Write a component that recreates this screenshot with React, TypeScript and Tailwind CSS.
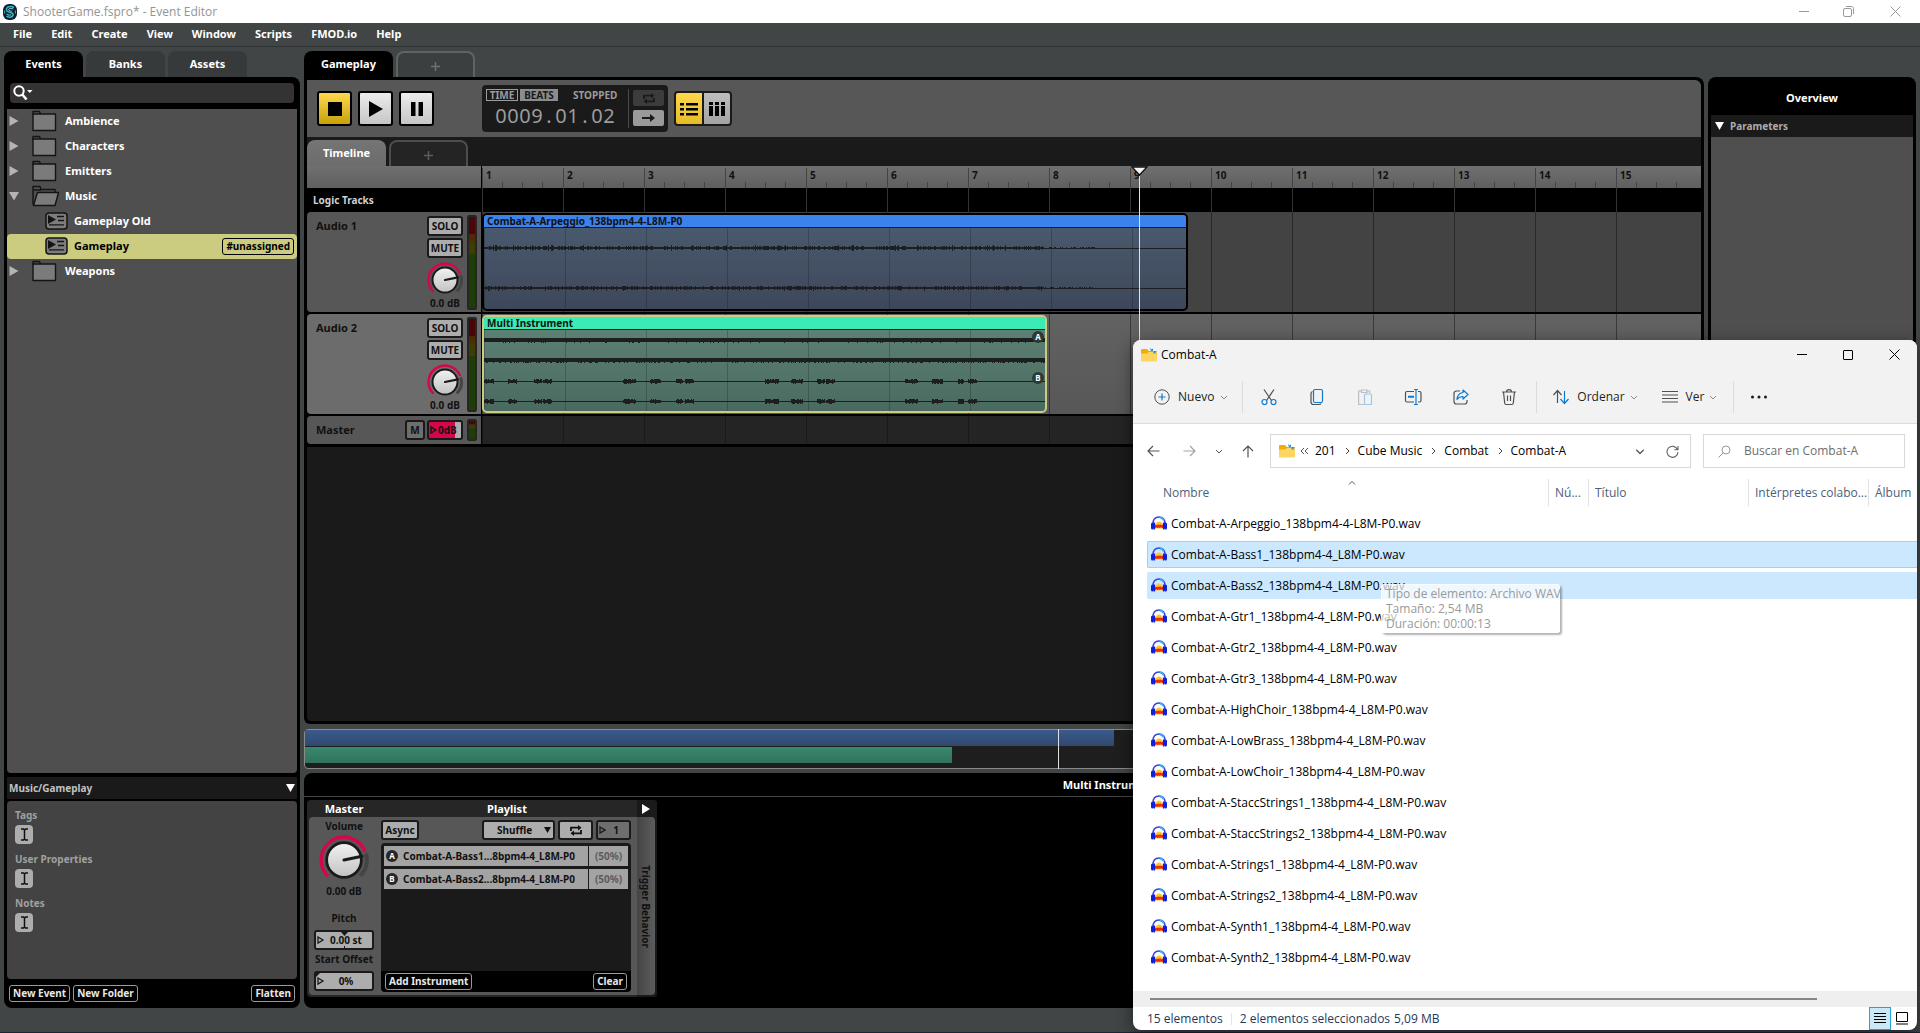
import React from "react";

const UI = "font-['Noto_Sans',sans-serif]";
const WIN = "font-['Open_Sans',sans-serif]";

/* ---------- small drawings ---------- */

function FmodLogo() {
  return (
    <svg width="14" height="16" viewBox="0 0 14 16" aria-hidden="true">
      <rect width="14" height="16" rx="6" fill="#111f2a" />
      <path d="M11 3.6C9 1.8 4.6 2 3.6 4.6 2.8 7 5 8 7 8.4c2.200.4 3.600 1.300 3 3-.8 2-4 2.400-6.600.8" fill="none" stroke="#35b6cf" strokeWidth="1.5" />
      <path d="M10.300 5.200C8.500 4 5.800 4.200 5.600 5.600c0 1.200 1.800 1.300 3.200 1.800M3.600 10.200c1.600 1.200 4.400 1.200 4.700.1" fill="none" stroke="#7fe3ee" strokeWidth="1" />
      <path d="M1.600 6.500v3M12.400 6.500v3" stroke="#35b6cf" strokeWidth="1" />
    </svg>
  );
}

function FolderIcon({ open = false }: { open?: boolean }) {
  return (
    <svg width="28" height="22" viewBox="0 0 28 22" aria-hidden="true">
      {open ? (
        <g stroke="#141414" strokeWidth="1.400" strokeLinejoin="round">
          <path d="M1 20V1.500h7l1 3h14V7" fill="#4f4f4f" />
          <path d="M1 5h8" fill="none" />
          <path d="M5.500 7.500h21L23 20.500H1.500z" fill="#7b7b7b" />
        </g>
      ) : (
        <g stroke="#141414" strokeWidth="1.400" strokeLinejoin="round">
          <path d="M1 5V1.500h6.500l1 2.500" fill="#4f4f4f" />
          <path d="M1 4h22.500v16.500H1z" fill="#7b7b7b" />
        </g>
      )}
    </svg>
  );
}

function EventIcon() {
  return (
    <svg width="23" height="18" viewBox="0 0 23 18" aria-hidden="true">
      <rect x="1" y="1" width="21" height="16" rx="3" fill="#7d7d7d" stroke="#141414" strokeWidth="1.500" />
      <path d="M3 3v9l8-4.500z" fill="#141414" />
      <path d="M12 4.500h7M13 8.500h6M4 12.800h15" stroke="#141414" strokeWidth="1.300" />
    </svg>
  );
}

function Arrow({ open = false }: { open?: boolean }) {
  return (
    <svg width="10" height="10" viewBox="0 0 10 10" aria-hidden="true">
      <path d={open ? "M0 1h10L5 9.500z" : "M0.500 0L9.500 5 0.500 10z"} fill="#b4b4b4" />
    </svg>
  );
}

function TriDown() {
  return (
    <svg width="9" height="8" viewBox="0 0 9 8" aria-hidden="true">
      <path d="M0 0h9L4.500 8z" fill="#fff" />
    </svg>
  );
}

function LoopIcon() {
  return (
    <svg width="12" height="11" viewBox="0 0 12 11" aria-hidden="true" fill="none" stroke="currentColor" strokeWidth="1.800">
      <path d="M1 6V2.700h8" />
      <path d="M11 5v3.300H3" />
      <path d="M8 0l3.500 2.700L8 5.400z" fill="currentColor" stroke="none" />
      <path d="M4 5.600L.5 8.300 4 11z" fill="currentColor" stroke="none" />
    </svg>
  );
}

function Knob({ label, large = false }: { label: string; large?: boolean }) {
  return (
    <div className={large ? "relative size-[50px]" : "relative size-9"}>
      <svg viewBox="0 0 36 36" className="size-full" aria-hidden="true">
        <defs>
          <linearGradient id="knobFace" x1="0" y1="0" x2="0" y2="1">
            <stop offset="0" stopColor="#f2f2f2" />
            <stop offset="1" stopColor="#c2c2c2" />
          </linearGradient>
        </defs>
        <path d="M33.800 13.400A16.400 16.400 0 0 1 29.800 29.400" fill="none" stroke="#454545" strokeWidth="3" />
        <path d="M6.400 29.600A16.400 16.400 0 1 1 33.300 12.200" fill="none" stroke="#d6064a" strokeWidth="2.400" />
        <circle cx="18" cy="18" r="12.500" fill="url(#knobFace)" stroke="#1a1a1a" strokeWidth="2" />
        <path d="M18 18L31 15.300" stroke="#1a1a1a" strokeWidth="2.200" strokeLinecap="round" />
      </svg>
      <input type="range" aria-label={label} defaultValue={75} className="absolute inset-0 size-full opacity-0" />
    </div>
  );
}

/* ---------- left browser ---------- */

const FOLDERS: { name: string; kind: "folder" | "open" | "event"; active?: boolean }[] = [
  { name: "Ambience", kind: "folder" },
  { name: "Characters", kind: "folder" },
  { name: "Emitters", kind: "folder" },
  { name: "Music", kind: "open" },
  { name: "Gameplay Old", kind: "event" },
  { name: "Gameplay", kind: "event", active: true },
  { name: "Weapons", kind: "folder" },
];

function Browser() {
  return (
    <aside className="flex w-[296px] shrink-0 flex-col">
      <div className="flex gap-[3px]">
        {["Events", "Banks", "Assets"].map((t, i) => (
          <button
            key={t}
            className={
              "h-[26px] w-[79px] rounded-t-lg text-[11px] font-bold text-white " + (i === 0 ? "bg-black" : "bg-[#363a3a]")
            }
          >
            {t}
          </button>
        ))}
      </div>
      <div className="flex flex-1 flex-col rounded-b-lg rounded-tr-lg bg-black px-[3px] pt-[6px]">
        <label className="mx-[3px] flex h-5 items-center rounded bg-[#333] pl-[3px]">
          <svg width="20" height="16" viewBox="0 0 20 16" aria-hidden="true">
            <circle cx="6" cy="6" r="4.700" fill="none" stroke="#fff" strokeWidth="2" />
            <path d="M9.300 9.500L13.500 14.500" stroke="#fff" strokeWidth="2.600" />
            <path d="M14 5h5.500l-2.700 3z" fill="#fff" />
          </svg>
          <input aria-label="Search events" className="min-w-0 flex-1 bg-transparent text-[12px] text-white outline-none" />
        </label>
        <ul className="mt-[6px] flex-1 rounded-b bg-[#4f4f4f]">
          {FOLDERS.map((f) => (
            <li key={f.name}>
              <button
                className={
                  "flex h-[25px] w-full items-center rounded-sm pb-px text-left text-[11px] font-bold " +
                  (f.active ? "bg-[#cccc80] text-black" : "text-white")
                }
              >
                {f.kind === "event" ? (
                  <>
                    <span className="ml-[38px] w-[29px]">
                      <EventIcon />
                    </span>
                    <span className="flex-1">{f.name}</span>
                    {f.active && (
                      <span className="mr-[3px] flex h-[17px] items-center rounded-[3px] border border-black px-[3px] text-[10px]">
                        #unassigned
                      </span>
                    )}
                  </>
                ) : (
                  <>
                    <span className="ml-[2px] w-[23px]">
                      <Arrow open={f.kind === "open"} />
                    </span>
                    <span className="w-[33px]">
                      <FolderIcon open={f.kind === "open"} />
                    </span>
                    {f.name}
                  </>
                )}
              </button>
            </li>
          ))}
        </ul>
        <div className="mt-1 flex h-[22px] items-center justify-between bg-[#1a1a1a] px-[2px] text-[10px] font-bold text-[#c2c2c2]">
          Music/Gameplay
          <TriDown />
        </div>
        <div className="mt-[2px] h-[178px] rounded bg-[#434343] px-2 pt-[5px]">
          {["Tags", "User Properties", "Notes"].map((t) => (
            <div key={t} className="h-11 text-[10px] leading-[18px] font-bold text-[#a0a0a0]">
              {t}
              <button aria-label={"Edit " + t} className="mt-px flex h-[19px] w-[18px] items-center justify-center rounded bg-[#adadad]">
                <svg width="9" height="13" viewBox="0 0 9 13" fill="none" stroke="#111" strokeWidth="1.500" aria-hidden="true">
                  <path d="M1 1h2.500l1 1 1-1H8M1 12h2.500l1-1 1 1H8M4.500 2v9" />
                </svg>
              </button>
            </div>
          ))}
        </div>
        <div className="flex h-[29px] items-center gap-[3px] px-[2px]">
          <DarkButton>New Event</DarkButton>
          <DarkButton>New Folder</DarkButton>
          <div className="flex-1" />
          <DarkButton>Flatten</DarkButton>
        </div>
      </div>
    </aside>
  );
}

function DarkButton({ children }: { children: React.ReactNode }) {
  return (
    <button className="h-[17px] rounded-[3px] border border-[#9a9a9a] bg-black px-[3px] text-[10px] leading-[15px] font-bold whitespace-nowrap text-[#e8e8e8]">
      {children}
    </button>
  );
}

/* ---------- editor ---------- */

function AddTab({ dark = false }: { dark?: boolean }) {
  return (
    <button
      aria-label="Add tab"
      className={
        "flex h-[26px] w-[79px] items-center justify-center rounded-t-lg border-2 border-b-0 pt-[2px] " +
        (dark ? "border-[#4d4d4d] bg-[#242424] text-[#5c5c5c]" : "border-[#606363] bg-[#3b3f3f] text-[#6e7272]")
      }
    >
      <svg width="9" height="9" viewBox="0 0 9 9" stroke="currentColor" strokeWidth="1.500" aria-hidden="true">
        <path d="M4.500 0v9M0 4.500h9" />
      </svg>
    </button>
  );
}

function Transport() {
  const big = "flex h-[35px] w-[35px] items-center justify-center rounded-[3px] border-2 border-black ";
  return (
    <div className="flex h-[57px] items-center rounded-tr-md bg-[#575757] pl-[10px]">
      <div className="flex gap-[6px]">
        <button aria-label="Stop" className={big + "bg-linear-to-b from-[#ffd84a] to-[#c7a100]"}>
          <span className="size-[14px] bg-black" />
        </button>
        <button aria-label="Play" className={big + "bg-linear-to-b from-[#ececec] to-[#c6c6c6]"}>
          <svg width="14" height="16" viewBox="0 0 14 16" aria-hidden="true">
            <path d="M0 0l14 8-14 8z" />
          </svg>
        </button>
        <button aria-label="Pause" className={big + "bg-linear-to-b from-[#ececec] to-[#c6c6c6]"}>
          <svg width="12" height="14" viewBox="0 0 12 14" aria-hidden="true">
            <path d="M0 0h4.500v14H0zM7.500 0H12v14H7.500z" />
          </svg>
        </button>
      </div>
      <div className="ml-[48px] flex h-[47px] w-[186px] rounded bg-[#1a1a1a] py-1 pl-1 text-[#9c9c9c]">
        <div className="w-[143px] border-r border-[#4a4a4a]">
          <div className="flex h-3 items-center text-[10px] leading-3 font-bold">
            <button className="h-3 w-8 border border-[#9c9c9c] leading-[10px]">TIME</button>
            <button className="ml-[2px] h-3 w-[38px] bg-[#8c8c8c] leading-3 text-[#1a1a1a]">BEATS</button>
            <span className="ml-[15px]">STOPPED</span>
          </div>
          <div className="mt-[3px] flex justify-center pr-1 text-[20px] leading-[24px]">
            {"0009.01.02".split("").map((c, i) => (
              <span key={i} className="w-3 text-center">
                {c}
              </span>
            ))}
          </div>
        </div>
        <div className="ml-1 flex flex-col gap-1 pt-px">
          <button aria-label="Loop" className="flex h-4 w-[31px] items-center justify-center rounded-[2px] bg-[#3c3c3c] text-[#1a1a1a]">
            <LoopIcon />
          </button>
          <button aria-label="Follow playhead" className="flex h-4 w-[31px] items-center justify-center rounded-[2px] bg-[#9a9a9a]">
            <svg width="13" height="8" viewBox="0 0 13 8" aria-hidden="true">
              <path d="M0 3h8V0l5 4-5 4V5H0z" fill="#1a1a1a" />
            </svg>
          </button>
        </div>
      </div>
      <div className="ml-[6px] flex h-[35px] w-[58px] rounded border-2 border-[#1a1a1a] bg-[#1a1a1a]">
        <button aria-label="Track view" className="flex w-[26px] items-center justify-center rounded-l-[2px] bg-linear-to-b from-[#ffd84a] to-[#e6bc25]">
          <svg width="18" height="14" viewBox="0 0 18 14" aria-hidden="true">
            <path d="M0 1h4v2.500H0zM6 1h12v2.500H6zM0 6h4v2.500H0zM6 6h12v2.500H6zM0 11h4v2.500H0zM6 11h12v2.500H6z" />
          </svg>
        </button>
        <button aria-label="Mixer view" className="ml-[2px] flex flex-1 items-center justify-center rounded-r-[2px] bg-linear-to-b from-[#bdbdbd] to-[#a3a3a3]">
          <svg width="16" height="14" viewBox="0 0 16 14" aria-hidden="true">
            <path d="M0 0h4v3H0zM6 0h4v3H6zM12 0h4v3h-4zM0 4h4v10H0zM6 4h4v10H6zM12 4h4v10h-4z" />
          </svg>
        </button>
      </div>
    </div>
  );
}

const BARS = Array.from({ length: 15 }, (_, i) => i + 1);

function GridLines({ tone }: { tone: string }) {
  return (
    <div className="pointer-events-none absolute inset-0 flex overflow-hidden" aria-hidden="true">
      {BARS.map((b) => (
        <div key={b} className={"w-[81px] shrink-0 border-l " + tone} />
      ))}
    </div>
  );
}

function Ruler() {
  return (
    <div className="flex h-[22px] flex-1 overflow-hidden bg-linear-to-b from-[#707070] to-[#5f5f5f]">
      {BARS.map((b) => (
        <div key={b} className="relative mt-[2px] w-[81px] shrink-0 border-l border-[#444] pl-[3px] text-[10px] leading-[15px] font-bold text-[#111]">
          {b}
          <div className="absolute bottom-0 left-0 flex h-[6px]">
            <i className="w-5 border-r border-[#444]" />
            <i className="w-5 border-r border-[#444]" />
            <i className="w-5 border-r border-[#444]" />
          </div>
        </div>
      ))}
    </div>
  );
}

function seeded(seed: number) {
  let s = seed;
  return () => {
    s = (s * 16807) % 2147483647;
    return s / 2147483647;
  };
}

/* One column per pixel; sizes are [quiet, medium, peak] and odds the thresholds for the last two. */
function noisePath(y: number, width: number, end: number, sizes: number[], odds: number[], seed: number) {
  const rnd = seeded(seed);
  let d = "";
  for (let x = 0; x < width; x += 1) {
    let h = 1;
    if (x < end) {
      const r = rnd();
      h = r > odds[1] ? sizes[2] : r > odds[0] ? sizes[1] : sizes[0];
    } else if (x < end + 52) {
      h = rnd() > 0.6 ? 2 : 1;
    }
    d += `M${x} ${y - Math.floor(h / 2)}h1v${h}h-1z`;
  }
  return d;
}

const BURSTS = [
  [0, 10], [24, 33], [50, 58], [59, 68], [139, 152], [166, 177], [192, 199], [201, 210],
  [281, 295], [307, 319], [333, 341], [342, 351], [421, 434], [448, 459], [474, 480], [484, 493],
];

function burstPath(y: number, width: number, seed: number) {
  const rnd = seeded(seed);
  let d = `M0 ${y}h${width}v1H0z`;
  BURSTS.forEach(([a, b]) => {
    for (let x = a; x < b; x += 1) {
      const h = 3 + Math.floor(rnd() * 3);
      d += `M${x} ${y - Math.floor(h / 2)}h1v${h}h-1z`;
    }
  });
  return d;
}

const WAVE_A = noisePath(20, 702, 560, [2, 4, 6], [0.6, 0.96], 77) + noisePath(60, 702, 560, [2, 4, 5], [0.65, 0.96], 991);
const WAVE_B =
  noisePath(10, 561, 700, [4, 4, 5], [0.7, 0.9], 313) +
  noisePath(30, 561, 700, [4, 5, 5], [0.7, 0.9], 815) +
  burstPath(51, 561, 5) +
  burstPath(71, 561, 19);

function Clip({ kind }: { kind: "audio" | "multi" }) {
  const a = kind === "audio";
  return (
    <div
      className={
        "absolute top-px left-0 h-[98px] overflow-hidden rounded-[5px] border-2 " +
        (a ? "w-[706px] border-black bg-linear-to-b from-[#4b5c70] to-[#3e475a]" : "w-[565px] border-[#cccc80] bg-linear-to-b from-[#5f8477] to-[#4b6a5f]")
      }
    >
      <GridLines tone="border-black/20" />
      <div
        className={
          "relative h-[13px] border-b border-[#1a1a1a] pl-[3px] text-[10px] leading-3 font-bold whitespace-nowrap text-[#111] " +
          (a ? "bg-[#3a82ec]" : "bg-[#3aebb5]")
        }
      >
        {a ? "Combat-A-Arpeggio_138bpm4-4-L8M-P0" : "Multi Instrument"}
      </div>
      <svg width={a ? 702 : 561} height="81" className="relative block" shapeRendering="crispEdges" aria-hidden="true">
        <path d={a ? WAVE_A : WAVE_B} fill="#1c1f20" />
      </svg>
      {!a && (
        <div className="absolute top-[14px] right-[1px] flex flex-col gap-[29px]">
          {["A", "B"].map((l) => (
            <span key={l} className="flex size-3 items-center justify-center rounded-full bg-[#2c3a36] text-[8px] leading-3 font-bold text-white">
              {l}
            </span>
          ))}
        </div>
      )}
    </div>
  );
}

function Meter() {
  return (
    <div className="flex w-[10px] flex-col overflow-hidden rounded-[2px] border-2 border-[#262626]">
      <span className="h-[19%] bg-[#4a0508]" />
      <span className="h-[7%] bg-[#4c2b06]" />
      <span className="h-[15%] bg-[#3f3d06]" />
      <span className="flex-1 bg-[#1e3d07]" />
    </div>
  );
}

function Track({ name, active = false, children }: { name: string; active?: boolean; children: React.ReactNode }) {
  const btn = "h-5 w-9 rounded-[3px] border-2 border-[#1a1a1a] bg-[#adadad] text-[10px] leading-4 font-bold text-[#111]";
  return (
    <div className="mb-[2px] flex h-[100px] gap-px">
      <div className={"flex w-[174px] shrink-0 rounded-l pr-1 " + (active ? "bg-[#6c6c6c]" : "bg-[#575757]")}>
        <div className="flex-1 pt-[5px] pl-[9px] text-[11px] leading-[18px] font-bold text-[#111]">{name}</div>
        <div className="mr-1 flex flex-col items-center pt-1">
          <button className={btn}>SOLO</button>
          <button className={btn + " mt-[2px]"}>MUTE</button>
          <div className="mt-1 h-[33px]">
            <Knob label={name + " volume"} />
          </div>
          <span className="text-[10px] leading-4 font-bold whitespace-nowrap text-[#111]">0.0 dB</span>
        </div>
        <div className="flex py-[2px] pt-[3px]">
          <Meter />
        </div>
      </div>
      <div className={"relative flex-1 overflow-hidden " + (active ? "bg-linear-to-b from-[#626262] to-[#575757]" : "bg-[#434343]")}>
        <GridLines tone="border-black/40" />
        {children}
      </div>
    </div>
  );
}

function Editor() {
  return (
    <section className="flex min-w-0 flex-1 flex-col">
      <div className="flex gap-[3px]">
        <button className="h-[26px] w-[89px] rounded-t-lg bg-black text-[11px] font-bold text-white">Gameplay</button>
        <AddTab />
      </div>
      <div className="flex flex-1 flex-col rounded-b-md rounded-tr-lg bg-black p-[3px]">
        <Transport />
        <div className="flex h-[29px] items-end gap-[3px] bg-[#1a1a1a]">
          <button className="h-[26px] w-[79px] rounded-t-lg bg-linear-to-b from-[#757575] to-[#6c6c6c] text-[11px] font-bold text-white">Timeline</button>
          <AddTab dark />
        </div>
        <div className="relative">
          <div className="flex gap-px">
            <div className="w-[174px] bg-linear-to-b from-[#707070] to-[#5f5f5f]" />
            <Ruler />
          </div>
          <div className="flex h-6 gap-px">
            <div className="w-[174px] pl-[6px] text-[10px] leading-6 font-bold text-[#d0d0d0]">Logic Tracks</div>
            <div className="relative flex-1">
              <GridLines tone="border-[#333]" />
            </div>
          </div>
          <Track name="Audio 1">
            <Clip kind="audio" />
          </Track>
          <Track name="Audio 2" active>
            <Clip kind="multi" />
          </Track>
          <div className="flex h-7 gap-px">
            <div className="flex w-[174px] items-center rounded-l bg-[#575757] pr-1">
              <span className="flex-1 pl-[9px] text-[11px] font-bold text-[#111]">Master</span>
              <button className="mr-[2px] h-5 w-5 rounded-[3px] border-2 border-[#1a1a1a] bg-[#6e6e6e] text-[10px] leading-4 font-bold text-[#111]">M</button>
              <label className="mr-1 flex h-5 w-9 items-center rounded-[3px] border-2 border-[#1a1a1a] bg-linear-to-r from-[#d6064a] from-80% to-[#adadad] to-80%">
                <svg width="7" height="8" viewBox="0 0 7 8" className="ml-px shrink-0" aria-hidden="true">
                  <path d="M1 1l5 3-5 3z" fill="none" stroke="#1a1a1a" strokeWidth="1.500" />
                </svg>
                <input aria-label="Master volume" defaultValue="0dB" className="w-6 bg-transparent pl-px text-[10px] font-bold text-[#111] outline-none" />
              </label>
              <div className="flex h-[22px]">
                <Meter />
              </div>
            </div>
            <div className="relative flex-1 bg-[#242424]">
              <GridLines tone="border-black/30" />
            </div>
          </div>
          <div className="absolute top-0 left-[823px] flex h-[280px] w-[19px] flex-col items-center">
            <svg width="19" height="10" viewBox="0 0 19 10" className="shrink-0" aria-hidden="true">
              <path d="M2 1h15L9.500 9z" fill="#f4f4f4" stroke="#111" strokeWidth="1.300" />
            </svg>
            <div className="w-px flex-1 bg-[#e0e0e0]" />
          </div>
        </div>
        <div className="mt-[3px] flex-1 rounded-b bg-[#1a1a1a]" />
      </div>
      <div className="relative mt-[5px] h-10 rounded-sm border border-[#8a8a8a] bg-[#1e1e1e]">
        <div className="h-4 w-[809px] bg-linear-to-b from-[#3a5b8c] to-[#30486f]" />
        <div className="mt-px h-4 w-[647px] bg-linear-to-b from-[#378a6d] to-[#31725d]" />
        <div className="absolute -top-px left-[753px] h-10 w-px bg-[#e0e0e0]" />
      </div>
    </section>
  );
}

/* ---------- deck ---------- */

function ValueBox({ label, value, mark = false }: { label: string; value: string; mark?: boolean }) {
  return (
    <label className="flex flex-col items-center text-[10px] leading-[18px] font-bold text-[#111]">
      <span className="whitespace-nowrap">{label}</span>
      <span className="relative mt-[3px] block h-5 w-[60px] rounded-[3px] border-2 border-[#1a1a1a] bg-[#adadad]">
        <svg width="56" height="16" viewBox="0 0 56 16" className="absolute top-0 left-0" aria-hidden="true">
          <path d="M2 5l5 3-5 3z" fill="none" stroke="#1a1a1a" strokeWidth="1.300" />
          {mark ? <path d="M25 0h7l-3.500 4zM28 14h1v2h-1z" fill="#1a1a1a" /> : <path d="M0 0h4L0 4z" fill="#1a1a1a" />}
        </svg>
        <input defaultValue={value} className="relative block h-4 w-full bg-transparent pl-1 text-center text-[10px] outline-none" />
      </span>
    </label>
  );
}

function Deck() {
  const btn = "h-5 rounded-[3px] border-2 border-[#1a1a1a] bg-[#adadad] text-[10px] leading-4 font-bold text-[#111]";
  return (
    <section className="mt-1 h-[235px] rounded-lg bg-black">
      <h2 className="h-6 border-b border-[#444] text-center text-[11px] leading-6 font-bold text-white">Multi Instrument</h2>
      <div className="mt-[3px] ml-[3px] flex h-[197px] w-[350px] overflow-hidden rounded bg-[#262626]">
        <div className="flex w-[330px] flex-col pb-[2px] pl-[2px]">
          <div className="flex h-[17px] text-[11px] leading-[17px] font-bold text-white">
            <span className="w-[70px] text-center">Master</span>
            <span className="flex-1 pr-[2px] text-center">Playlist</span>
          </div>
          <div className="flex flex-1 rounded-l bg-[#575757]">
            <div className="flex w-[72px] flex-col items-center pr-[2px] text-[10px] leading-[18px] font-bold text-[#111]">
              Volume
              <div className="h-[47px]">
                <Knob label="Instrument volume" large />
              </div>
              <span>0.00 dB</span>
              <div className="mt-[9px]">
                <ValueBox label="Pitch" value="0.00 st" mark />
              </div>
              <ValueBox label="Start Offset" value="0%" />
            </div>
            <div className="flex w-[250px] flex-col pt-[3px] pb-[3px]">
              <div className="flex h-5">
                <button className={btn + " w-[38px]"}>Async</button>
                <div className="relative ml-[63px] h-5">
                  <select aria-label="Playlist mode" className={btn + " block w-[73px] appearance-none py-0 pl-[13px] outline-none"}>
                    <option>Shuffle</option>
                  </select>
                  <svg width="7" height="6" viewBox="0 0 7 6" className="pointer-events-none absolute top-[7px] right-1" aria-hidden="true">
                    <path d="M0 0h7L3.500 6z" fill="#111" />
                  </svg>
                </div>
                <button aria-label="Loop playlist" className={btn + " ml-[3px] flex w-[35px] items-center justify-center"}>
                  <LoopIcon />
                </button>
                <label className="ml-[3px] flex h-5 w-[35px] items-center rounded-[3px] border-2 border-[#1a1a1a] bg-[#6e6e6e]">
                  <svg width="8" height="10" viewBox="0 0 8 10" className="shrink-0" aria-hidden="true">
                    <path d="M2 2l5 3-5 3z" fill="none" stroke="#1a1a1a" strokeWidth="1.300" />
                  </svg>
                  <input aria-label="Play count" defaultValue="1" className="w-5 bg-transparent text-center text-[10px] font-bold text-[#111] outline-none" />
                </label>
              </div>
              <div className="mt-[3px] flex flex-1 flex-col gap-[3px] rounded-t bg-[#1a1a1a] p-[3px]">
                {[
                  ["A", "Combat-A-Bass1...8bpm4-4_L8M-P0"],
                  ["B", "Combat-A-Bass2...8bpm4-4_L8M-P0"],
                ].map(([l, n]) => (
                  <div key={l} className="flex h-5 gap-px text-[10px] font-bold">
                    <span className="flex flex-1 items-center bg-[#a3a3a3] pl-[2px] whitespace-nowrap text-[#111]">
                      <span className="mr-[5px] flex size-3 items-center justify-center rounded-full bg-[#262626] text-[8px] text-white">{l}</span>
                      {n}
                    </span>
                    <span className="flex w-[39px] items-center justify-center bg-[#a3a3a3] text-[#5c5c5c]">(50%)</span>
                  </div>
                ))}
              </div>
              <div className="flex h-[21px] items-center justify-between rounded-b bg-black px-1">
                <DarkButton>Add Instrument</DarkButton>
                <DarkButton>Clear</DarkButton>
              </div>
            </div>
          </div>
        </div>
        <div className="flex w-5 flex-col bg-[#1a1a1a] pr-[2px] pb-[2px]">
          <button aria-label="Expand" className="flex h-[17px] items-center justify-center">
            <svg width="8" height="10" viewBox="0 0 8 10" aria-hidden="true">
              <path d="M0 0l8 5-8 5z" fill="#fff" />
            </svg>
          </button>
          <button className="flex flex-1 items-center justify-center rounded-r bg-linear-to-r from-[#454545] to-[#5c5c5c] text-[10px] leading-[18px] font-bold text-[#111] [writing-mode:vertical-rl]">
            Trigger Behavior
          </button>
        </div>
      </div>
    </section>
  );
}

/* ---------- file explorer window ---------- */

const FILES = [
  "Combat-A-Arpeggio_138bpm4-4-L8M-P0.wav",
  "Combat-A-Bass1_138bpm4-4_L8M-P0.wav",
  "Combat-A-Bass2_138bpm4-4_L8M-P0.wav",
  "Combat-A-Gtr1_138bpm4-4_L8M-P0.wav",
  "Combat-A-Gtr2_138bpm4-4_L8M-P0.wav",
  "Combat-A-Gtr3_138bpm4-4_L8M-P0.wav",
  "Combat-A-HighChoir_138bpm4-4_L8M-P0.wav",
  "Combat-A-LowBrass_138bpm4-4_L8M-P0.wav",
  "Combat-A-LowChoir_138bpm4-4_L8M-P0.wav",
  "Combat-A-StaccStrings1_138bpm4-4_L8M-P0.wav",
  "Combat-A-StaccStrings2_138bpm4-4_L8M-P0.wav",
  "Combat-A-Strings1_138bpm4-4_L8M-P0.wav",
  "Combat-A-Strings2_138bpm4-4_L8M-P0.wav",
  "Combat-A-Synth1_138bpm4-4_L8M-P0.wav",
  "Combat-A-Synth2_138bpm4-4_L8M-P0.wav",
];

function AudacityIcon() {
  return (
    <svg width="16" height="15" viewBox="0 0 16 15" className="shrink-0" aria-hidden="true">
      <path d="M3.500 12.500V9.500C4.500 7.500 6 5.500 8 5.500s3.500 2 4.500 4v3z" fill="#ffc629" />
      <path d="M3.500 9.500l1.300-.7 1.200.5 1-1 1 .8 1.200-.9 1 1 1.200-.5 1.100.8v2.200l-1.500.3-1-.7-1.200.8-1-.7-1.300.7-1-.6-1.500.6-.5-.6z" fill="#f02810" />
      <path d="M2 8C2 3 4.500 1 8 1s6 2 6 7" fill="none" stroke="#3a44e0" strokeWidth="1.500" />
      <path d="M9 1.500c2 .3 3 1.300 3.500 2.700" stroke="#39b3ee" strokeWidth="1.800" fill="none" />
      <rect x="0" y="6.500" width="3" height="7" rx="1.500" fill="#1020d8" />
      <rect x="13" y="6.500" width="3" height="7" rx="1.500" fill="#1020d8" />
      <path d="M3.500 6.500v7M12.500 6.500v7" stroke="#1020d8" strokeWidth="1.200" />
    </svg>
  );
}

function YellowFolder() {
  return (
    <svg width="16" height="14" viewBox="0 0 16 14" className="shrink-0" aria-hidden="true">
      <path d="M0 2C0 1.300.5 1 1 1h5l2 2h8v10H0z" fill="#f2ab0c" />
      <path d="M0 5.500h6l2-1.500h8v8.500c0 .6-.4 1-1 1H1c-.6 0-1-.4-1-1z" fill="#ffd562" />
      <path d="M9 .6l2 1.600M11.500.8v1.900H9.700M15 5.600l-1.700-1.700M13 5.600V3.700h1.800" stroke="#1c84d4" strokeWidth="1" fill="none" />
    </svg>
  );
}

function Chevron({ dir = "down", size = 8, stroke = "#8a8a8a" }: { dir?: "down" | "up" | "right"; size?: number; stroke?: string }) {
  const d = dir === "down" ? "M1 3l3 3 3-3" : dir === "up" ? "M1 5.500L4 2.500l3 3" : "M3 1l3 3-3 3";
  return (
    <svg width={size} height={size} viewBox="0 0 8 8" fill="none" stroke={stroke} className="shrink-0" aria-hidden="true">
      <path d={d} />
    </svg>
  );
}

const ic = { width: 18, height: 18, viewBox: "0 0 18 18", fill: "none", strokeWidth: 1.2, "aria-hidden": true } as const;
const G = "#505050";
const B = "#0c7ad2";

function ExplorerTools() {
  const tool = "flex size-12 items-center justify-center";
  return (
    <div className="flex h-[54px] items-center pt-[2px] text-[12px] text-[#1f1f1f]">
      <button className="ml-[21px] flex items-center">
        <svg width="16" height="16" viewBox="0 0 16 16" fill="none" aria-hidden="true">
          <circle cx="8" cy="8" r="7.200" stroke={G} />
          <path d="M8 4.500v7M4.500 8h7" stroke={B} strokeWidth="1.200" />
        </svg>
        <span className="mr-[6px] ml-2">Nuevo</span>
        <Chevron />
      </button>
      <div className="ml-[14px] h-8 w-px bg-[#dcdcdc]" />
      <div className="ml-[2px] flex">
        <button aria-label="Cortar" className={tool}>
          <svg {...ic}>
            <path d="M4 1.500l7.500 11M14 1.500l-7.500 11" stroke={G} />
            <circle cx="4.500" cy="14" r="2.500" stroke={B} />
            <circle cx="13.500" cy="14" r="2.500" stroke={B} />
          </svg>
        </button>
        <button aria-label="Copiar" className={tool}>
          <svg {...ic}>
            <path d="M4.500 3.500C3.500 3.800 3 4.500 3 5.500V14c0 1.600 1 2.500 2.500 2.500H11c1 0 1.700-.4 2-1" stroke={G} />
            <rect x="5.500" y="1.500" width="9" height="13" rx="1.500" stroke={B} />
          </svg>
        </button>
        <button aria-label="Pegar" className={tool}>
          <svg {...ic}>
            <path d="M5.500 3H2.600v13.500H8M11 3h2.600v2M5.500 2h5.500v2.500H5.500z" stroke="#bdbdbd" />
            <rect x="8.500" y="6" width="7" height="10.500" rx="1" stroke="#9cc6ea" />
          </svg>
        </button>
        <button aria-label="Cambiar nombre" className={tool}>
          <svg {...ic}>
            <path d="M10 3.500H3c-1 0-1.500.6-1.500 1.500v7.500c0 1 .6 1.500 1.500 1.500h7M14 3.500h1.500c1 0 1.500.6 1.500 1.500v7.500c0 1-.6 1.500-1.500 1.500H14" stroke={G} />
            <path d="M12 1.500v15M10 1.500h4M10 16.500h4" stroke={B} />
            <path d="M4 8.800h6" stroke={B} strokeWidth="2" />
          </svg>
        </button>
        <button aria-label="Compartir" className={tool}>
          <svg {...ic}>
            <path d="M8 3H4.500C3 3 2 4 2 5.500v8C2 15 3 16 4.500 16h8c1.500 0 2.500-1 2.500-2.500V12" stroke={G} />
            <path d="M11 2l5 4.500-5 4.500V8.500c-3 0-4.500 1-6 3 .3-4 2.500-6.500 6-7z" stroke={B} strokeLinejoin="round" />
          </svg>
        </button>
        <button aria-label="Eliminar" className={tool}>
          <svg {...ic} stroke={G}>
            <path d="M2 4h14M6.500 4c0-3.300 5-3.300 5 0M3.500 4l1.200 11c.1 1 .6 1.500 1.500 1.500h5.600c.9 0 1.400-.5 1.500-1.500L14.500 4M7.500 7.500v5.500M10.500 7.500v5.500" />
          </svg>
        </button>
      </div>
      <div className="ml-[3px] h-8 w-px bg-[#dcdcdc]" />
      <button className="ml-[15px] flex items-center">
        <svg {...ic}>
          <path d="M5.500 15V3M1.500 7l4-4.500 4 4.500" stroke={G} />
          <path d="M12.500 3v12M8.500 11l4 4.500 4-4.500" stroke={B} />
        </svg>
        <span className="mr-[5px] ml-[7px]">Ordenar</span>
        <Chevron />
      </button>
      <button className="ml-6 flex items-center">
        <svg width="16" height="12" viewBox="0 0 16 12" stroke={G} aria-hidden="true">
          <path d="M0 .5h16M0 4h16M0 7.500h16M0 11h16" />
        </svg>
        <span className="mr-[5px] ml-[8px]">Ver</span>
        <Chevron />
      </button>
      <div className="ml-[16px] h-8 w-px bg-[#dcdcdc]" />
      <button aria-label="Más" className="ml-[16px]">
        <svg width="18" height="4" viewBox="0 0 18 4" fill="#1a1a1a" aria-hidden="true">
          <circle cx="2.500" cy="2" r="1.500" />
          <circle cx="9" cy="2" r="1.500" />
          <circle cx="15.500" cy="2" r="1.500" />
        </svg>
      </button>
    </div>
  );
}

function Explorer() {
  const th = "relative border-l border-[#e2e2e2] p-0 pl-[6px] text-left font-normal whitespace-nowrap";
  return (
    <section
      className={
        WIN + " absolute top-[340px] right-[3px] flex w-[784px] flex-col overflow-hidden rounded-lg bg-white text-[12px] text-black shadow-[0_4px_16px_rgba(0,0,0,0.5)]"
      }
    >
      <div className="border-b border-[#dcdcdc] bg-[#f2f2f2]">
        <div className="flex h-[29px] items-center pl-2">
          <YellowFolder />
          <span className="ml-1 flex-1">Combat-A</span>
          <button aria-label="Minimizar" className="flex w-[46px] justify-center">
            <span className="h-px w-[10px] bg-black" />
          </button>
          <button aria-label="Maximizar" className="flex w-[46px] justify-center">
            <span className="size-[10px] rounded-[1px] border border-black" />
          </button>
          <button aria-label="Cerrar" className="flex w-[46px] justify-center">
            <svg width="11" height="11" viewBox="0 0 11 11" stroke="#000" aria-hidden="true">
              <path d="M.5.5l10 10M10.500.5l-10 10" />
            </svg>
          </button>
        </div>
        <ExplorerTools />
      </div>

      <div className="mt-[10px] flex h-[34px] items-center">
        <div className="flex w-[137px] items-center pl-[14px]">
          <button aria-label="Atrás">
            <svg width="13" height="12" viewBox="0 0 13 12" fill="none" stroke="#555" strokeWidth="1.200" aria-hidden="true">
              <path d="M12.500 6H1M6 1L1 6l5 5" />
            </svg>
          </button>
          <button aria-label="Adelante" className="ml-[23px]">
            <svg width="13" height="12" viewBox="0 0 13 12" fill="none" stroke="#a3a3a3" strokeWidth="1.200" aria-hidden="true">
              <path d="M.5 6H12M7 1l5 5-5 5" />
            </svg>
          </button>
          <button aria-label="Recientes" className="ml-[19px]">
            <Chevron stroke="#555" />
          </button>
          <button aria-label="Subir" className="ml-[19px]">
            <svg width="12" height="13" viewBox="0 0 12 13" fill="none" stroke="#555" strokeWidth="1.200" aria-hidden="true">
              <path d="M6 12.500V1M1 6l5-5 5 5" />
            </svg>
          </button>
        </div>
        <nav className="flex h-[34px] w-[421px] items-center border border-[#d9d9d9] pl-2">
          <YellowFolder />
          <svg width="9" height="8" viewBox="0 0 9 8" fill="none" stroke="#555" className="mr-[6px] ml-[5px]" aria-hidden="true">
            <path d="M4 1L1 4l3 3M8 1L5 4l3 3" />
          </svg>
          {["201", "Cube Music", "Combat", "Combat-A"].map((c, i) => (
            <React.Fragment key={c}>
              {i > 0 && (
                <span className="mx-[7px]">
                  <Chevron dir="right" stroke="#444" />
                </span>
              )}
              <button className="whitespace-nowrap">{c}</button>
            </React.Fragment>
          ))}
          <div className="flex-1" />
          <button aria-label="Ubicaciones anteriores" className="mr-[21px]">
            <Chevron size={10} stroke="#555" />
          </button>
          <button aria-label="Actualizar" className="mr-[11px]">
            <svg width="13" height="13" viewBox="0 0 13 13" fill="none" stroke="#666" strokeWidth="1.100" aria-hidden="true">
              <path d="M11.500 4.500A5.500 5.500 0 1 0 12 7M12 1v3.700H8.300" />
            </svg>
          </button>
        </nav>
        <label className="ml-3 flex h-[34px] w-[202px] items-center border border-[#d9d9d9] pl-[14px]">
          <svg width="13" height="13" viewBox="0 0 13 13" fill="none" stroke="#999" aria-hidden="true">
            <circle cx="8" cy="5" r="4" />
            <path d="M5 8L.5 12.500" />
          </svg>
          <input aria-label="Buscar" placeholder="Buscar en Combat-A" className="ml-[13px] min-w-0 flex-1 outline-none placeholder:text-[#6e6e6e]" />
        </label>
      </div>

      <div className="relative mt-[7px]">
        <span className="absolute top-[4px] left-[215px]">
          <Chevron dir="up" stroke="#555" />
        </span>
        <table className="ml-[14px] w-[770px] table-fixed border-separate border-spacing-x-0 border-spacing-y-1">
          <thead>
            <tr className="h-[27px] text-[#4c607a]">
              <th className="w-[401px] p-0 pl-4 text-left font-normal">Nombre</th>
              <th className={th + " w-10"}>Nú...</th>
              <th className={th + " w-40"}>Título</th>
              <th className={th + " w-[120px]"}>Intérpretes colabo...</th>
              <th className={th}>Álbum</th>
            </tr>
          </thead>
          <tbody>
            {FILES.map((f, i) => {
              const tone = i === 1 ? "bg-[#cce8ff] border-[#99d1ff]" : i === 2 ? "bg-[#cce8ff] border-[#cce8ff]" : "border-transparent";
              return (
                <tr key={f} className="h-[27px]">
                  <td className={"rounded-l-[2px] border-y border-l p-0 pl-[3px] " + tone}>
                    <div className="flex items-center gap-1 whitespace-nowrap">
                      <AudacityIcon />
                      {f}
                    </div>
                  </td>
                  <td colSpan={4} className={"border-y p-0 " + tone} />
                </tr>
              );
            })}
          </tbody>
        </table>
        <div
          role="tooltip"
          className="absolute top-[109px] left-[248px] w-[179px] rounded-[3px] border border-white/60 bg-white/70 py-px pl-1 leading-[15px] whitespace-nowrap text-[#9a9a9a] shadow-[2px_2px_2px_rgba(0,0,0,0.3)]"
        >
          Tipo de elemento: Archivo WAV
          <br />
          Tamaño: 2,54 MB
          <br />
          Duración: 00:00:13
        </div>
      </div>

      <div className="mt-4 h-4 bg-[#efefef] pt-[7px] pl-[17px]">
        <div className="h-[2px] w-[667px] bg-[#858585]" />
      </div>
      <div className="flex h-[23px] items-center pl-[14px] text-[#1e395b]">
        <span>15 elementos</span>
        <span className="mx-2 h-3 w-px bg-[#e5e5e5]" />
        <span>2 elementos seleccionados</span>
        <span className="ml-[4px] flex-1">5,09 MB</span>
        <button aria-label="Detalles" className="flex h-[23px] w-[22px] items-center justify-center border border-[#26a0da] bg-[#cbe8f6]">
          <svg width="12" height="11" viewBox="0 0 12 11" stroke="#000" aria-hidden="true">
            <path d="M0 .5h12M0 3.500h12M0 6.500h12M0 9.500h12" />
          </svg>
        </button>
        <button aria-label="Miniaturas" className="mr-2 ml-1 flex h-[17px] w-[14px] items-center justify-center">
          <svg width="12" height="13" viewBox="0 0 12 13" fill="none" stroke="#000" aria-hidden="true">
            <path d="M.5.500h11v9H.5zM0 12h12" />
          </svg>
        </button>
      </div>
    </section>
  );
}

/* ---------- page ---------- */

export default function App() {
  return (
    <div className={UI + " relative flex min-h-screen flex-col bg-[#414545]"}>
      <header className="flex h-[23px] items-center bg-white pl-[3px]">
        <FmodLogo />
        <span className={WIN + " ml-[6px] flex-1 text-[12px] text-[#949494]"}>ShooterGame.fspro* - Event Editor</span>
        <button aria-label="Minimize" className="flex w-[45px] justify-center">
          <span className="h-px w-[10px] bg-[#999]" />
        </button>
        <button aria-label="Restore" className="flex w-[45px] justify-center">
          <svg width="11" height="11" viewBox="0 0 11 11" fill="none" stroke="#999" aria-hidden="true">
            <rect x=".5" y="2.500" width="8" height="8" rx="1.500" />
            <path d="M3 .5h5.500c1.200 0 2 .8 2 2V8" />
          </svg>
        </button>
        <button aria-label="Close" className="flex w-[49px] justify-center">
          <svg width="11" height="11" viewBox="0 0 11 11" stroke="#999" aria-hidden="true">
            <path d="M.5.5l10 10M10.500.5l-10 10" />
          </svg>
        </button>
      </header>
      <nav className="flex h-6 items-center gap-[19px] border-b border-[#2f3333] pl-[13px] text-[11px] font-bold text-white">
        {["File", "Edit", "Create", "View", "Window", "Scripts", "FMOD.io", "Help"].map((m) => (
          <button key={m}>{m}</button>
        ))}
      </nav>
      <main className="flex flex-1 gap-1 px-1 pt-1">
        <Browser />
        <div className="flex min-w-0 flex-1 flex-col">
          <div className="flex flex-1 gap-1">
            <Editor />
            <aside className="mt-[26px] flex w-[208px] flex-col rounded-lg bg-black px-[3px] pb-[3px]">
              <h2 className="h-[38px] pt-1 text-center text-[11px] leading-[34px] font-bold text-white">Overview</h2>
              <button className="flex h-[22px] items-center gap-[6px] bg-[#1a1a1a] pl-1 text-[10px] font-bold text-[#adadad]">
                <TriDown />
                Parameters
              </button>
              <div className="flex-1 rounded-b bg-[#4f4f4f]" />
            </aside>
          </div>
          <Deck />
        </div>
      </main>
      <footer className="h-[25px] border-b border-[#1d2438]" />
      <Explorer />
    </div>
  );
}
